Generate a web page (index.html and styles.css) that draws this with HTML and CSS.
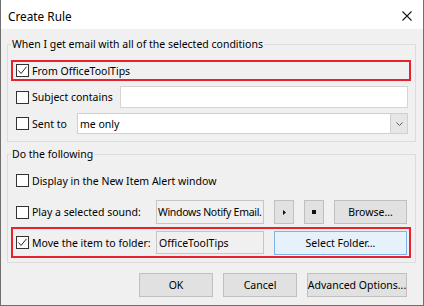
FILE: index.html
```html
<!DOCTYPE html>
<html lang="en">
<head>
<meta charset="utf-8">
<title>Create Rule</title>
<link rel="stylesheet" href="styles.css">
</head>
<body>
<div class="window">
  <div class="titlebar">
    <span class="title">Create Rule</span>
    <svg class="close" width="10" height="10" viewBox="0 0 10 10"><path d="M0.5 0.5L9.5 9.5M9.5 0.5L0.5 9.5" stroke="#1a1a1a" stroke-width="1.1" fill="none"/></svg>
  </div>
  <div class="content">
    <fieldset class="group g1">
      <legend>When I get email with all of the selected conditions</legend>
      <div class="row r-from hl">
        <label class="check">
          <span class="box"><svg width="11" height="11" viewBox="0 0 11 11"><polyline points="1.5,5.5 4,8.5 9.5,1.8" fill="none" stroke="#2a2a2a" stroke-width="1"/></svg></span>
          <span>From OfficeToolTips</span>
        </label>
      </div>
      <div class="row r-subject">
        <label class="check w-subject"><span class="box"></span><span>Subject contains</span></label>
        <div class="textbox subject-input"></div>
      </div>
      <div class="row r-sent">
        <label class="check w-sent"><span class="box"></span><span>Sent to</span></label>
        <div class="combo">
          <span class="combo-text">me only</span>
          <span class="combo-btn"><svg width="7" height="4" viewBox="0 0 7 4"><polyline points="0.5,0.5 3.5,3.5 6.5,0.5" fill="none" stroke="#5a5a5a" stroke-width="1"/></svg></span>
        </div>
      </div>
    </fieldset>
    <fieldset class="group g2">
      <legend>Do the following</legend>
      <div class="row r-display">
        <label class="check"><span class="box"></span><span>Display in the New Item Alert window</span></label>
      </div>
      <div class="row r-play">
        <label class="check w-long"><span class="box"></span><span>Play a selected sound:</span></label>
        <div class="field field-play"><span class="tight">Windows Notify Email.</span></div>
        <button class="btn btn-icon"><svg width="3" height="5" viewBox="0 0 3 5"><polygon points="0,0 3,2.5 0,5" fill="#111"/></svg></button>
        <button class="btn btn-icon"><span class="stop"></span></button>
        <button class="btn btn-browse">Browse...</button>
      </div>
      <div class="row r-move hl">
        <label class="check w-long">
          <span class="box"><svg width="11" height="11" viewBox="0 0 11 11"><polyline points="1.5,5.5 4,8.5 9.5,1.8" fill="none" stroke="#2a2a2a" stroke-width="1"/></svg></span>
          <span>Move the item to folder:</span>
        </label>
        <div class="field field-move">OfficeToolTips</div>
        <button class="btn btn-select">Select Folder...</button>
      </div>
    </fieldset>
    <div class="actions">
      <button class="btn btn-ok">OK</button>
      <button class="btn btn-cancel">Cancel</button>
      <button class="btn btn-adv">Advanced Options...</button>
    </div>
  </div>
</div>
</body>
</html>
```

FILE: styles.css
```css
* { box-sizing: border-box; }

html, body {
  margin: 0;
  padding: 0;
}

body {
  width: 424px;
  height: 306px;
  font-family: "Noto Sans", "Open Sans", sans-serif;
  font-size: 10.5px;
  color: #000;
  background: #f0f0f0;
}

.window {
  width: 424px;
  height: 306px;
  border: 1px solid #6f6f6f;
  border-top: none;
  background: #f0f0f0;
  display: flex;
  flex-direction: column;
}

.titlebar {
  height: 29px;
  flex: none;
  background: #fff;
  display: flex;
  align-items: center;
  justify-content: space-between;
  padding: 2px 11px 0 7px;
}

.title {
  font-size: 11.8px;
}

.content {
  padding: 7px 7px 0 6px;
  display: flex;
  flex-direction: column;
}

.group {
  margin: 0;
  min-width: 0;
  border: 1px solid #dcdcdc;
  padding: 7px 4px 5px 3px;
}

.group legend {
  padding: 0 1px;
  margin: 0;
  line-height: 17px;
}

.g2 {
  margin-top: 4px;
  padding-bottom: 4px;
}

.row {
  display: flex;
  align-items: center;
  width: 400px;
  border: 2px solid transparent;
  padding-left: 3px;
}

.hl {
  border-color: #e4232f;
}

.r-from { height: 21px; }
.r-subject { height: 26px; margin-top: 3px; }
.r-sent { height: 25px; margin-top: 1px; }
.r-display { height: 21px; }
.r-play { height: 28px; margin-top: 7px; }
.r-move { height: 31px; margin-top: 1px; }

.check {
  display: flex;
  align-items: center;
  gap: 3px;
  white-space: nowrap;
  flex: none;
}

.w-subject { width: 104px; }
.w-sent { width: 61px; }
.w-long { width: 140px; }

.box {
  width: 13px;
  height: 13px;
  flex: none;
  border: 1px solid #333;
  background: #fff;
  display: flex;
}

.textbox {
  height: 22px;
  background: #fff;
  border: 1px solid #d4d4d4;
}

.subject-input { width: 288px; }

.combo {
  width: 331px;
  height: 21px;
  background: #fff;
  border: 1px solid #d0d0d0;
  display: flex;
  align-items: stretch;
}

.combo-text {
  flex: 1;
  padding-left: 2px;
  display: flex;
  align-items: center;
}

.combo-btn {
  width: 17px;
  background: #e6e6e6;
  border-left: 1px solid #cfcfcf;
  display: flex;
  align-items: center;
  justify-content: center;
}

.field {
  width: 108px;
  background: #f0f0f0;
  border: 1px solid #c6c6c6;
  padding-left: 2px;
  white-space: nowrap;
  overflow: hidden;
  display: flex;
  align-items: center;
}

.tight {
  letter-spacing: -0.3px;
}

.field-play { height: 24px; padding-left: 1px; }
.field-move { height: 23px; }

.btn {
  height: 24px;
  margin: 0;
  padding: 0;
  font: inherit;
  color: #000;
  background: #e1e1e1;
  border: 1px solid #c0c0c0;
  display: flex;
  align-items: center;
  justify-content: center;
  white-space: nowrap;
}

.btn-icon {
  width: 20px;
  margin-left: 10px;
}

.stop {
  width: 4px;
  height: 4px;
  background: #111;
}

.btn-browse {
  width: 73px;
  margin-left: 10px;
}

.btn-select {
  width: 133px;
  margin-left: 10px;
  background: #e5f1fb;
  border-color: #7eb4ea;
}

.actions {
  display: flex;
  justify-content: flex-end;
  gap: 10px;
  margin-top: 10px;
  padding-right: 9px;
}

.btn-ok { width: 74px; }
.btn-cancel { width: 74px; }
.btn-adv { width: 100px; }
```
